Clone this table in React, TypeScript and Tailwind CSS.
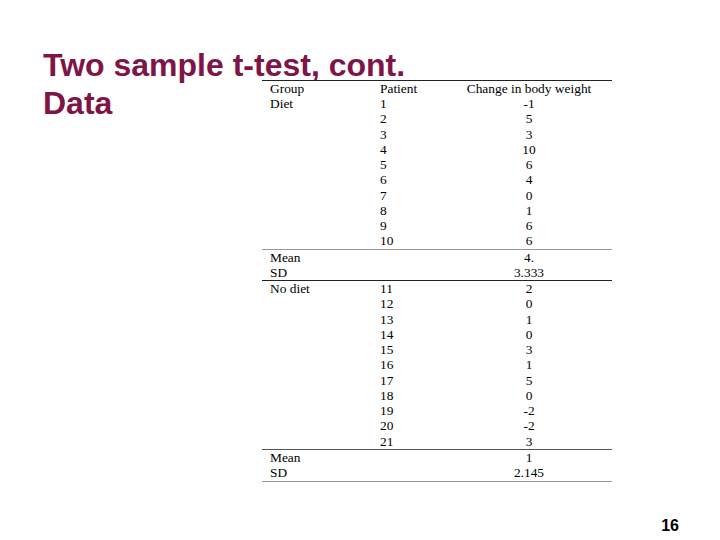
import React from "react";

const diet = [
  ["1", "-1"], ["2", "5"], ["3", "3"], ["4", "10"], ["5", "6"],
  ["6", "4"], ["7", "0"], ["8", "1"], ["9", "6"], ["10", "6"],
];
const noDiet = [
  ["11", "2"], ["12", "0"], ["13", "1"], ["14", "0"], ["15", "3"], ["16", "1"],
  ["17", "5"], ["18", "0"], ["19", "-2"], ["20", "-2"], ["21", "3"],
];

const Row = ({ a = "", b = "", c = "" }: { a?: string; b?: string; c?: string }) => (
  <div className="flex h-[15.25px] items-center leading-none">
    <div className="w-[110px] pl-2">{a}</div>
    <div className="w-[74px] pl-2">{b}</div>
    <div className="flex-1 text-center">{c}</div>
  </div>
);

export default function App() {
  return (
    <div className="relative w-[720px] h-[540px] bg-white pt-[50px] font-['Liberation_Sans',Arial,sans-serif]">
      <div className="h-[30px] pl-[43px] text-[32px] font-bold leading-[30px] text-[#7f1446] whitespace-nowrap">
        Two sample t-test, cont.
      </div>
      <div className="flex">
        <div className="w-[262px] pl-[43px] pt-[8px] text-[32px] font-bold leading-[30px] text-[#7f1446]">
          Data
        </div>
        <div className="w-[350px] border-t border-[#222] font-['Liberation_Serif','Times_New_Roman',serif] text-[13.4px] text-black">
          <Row a="Group" b="Patient" c="Change in body weight" />
          {diet.map(([p, v], i) => (
            <Row key={p} a={i === 0 ? "Diet" : ""} b={p} c={v} />
          ))}
          <div className="border-t border-[#999]" />
          <Row a="Mean" c="4." />
          <Row a="SD" c="3.333" />
          <div className="border-t border-[#222]" />
          {noDiet.map(([p, v], i) => (
            <Row key={p} a={i === 0 ? "No diet" : ""} b={p} c={v} />
          ))}
          <div className="border-t border-[#555]" />
          <Row a="Mean" c="1" />
          <Row a="SD" c="2.145" />
          <div className="border-t border-[#999]" />
        </div>
      </div>
      <div className="mt-[34px] flex justify-end pr-[41px] text-[16px] font-bold leading-[20px] text-black">
        16
      </div>
    </div>
  );
}
